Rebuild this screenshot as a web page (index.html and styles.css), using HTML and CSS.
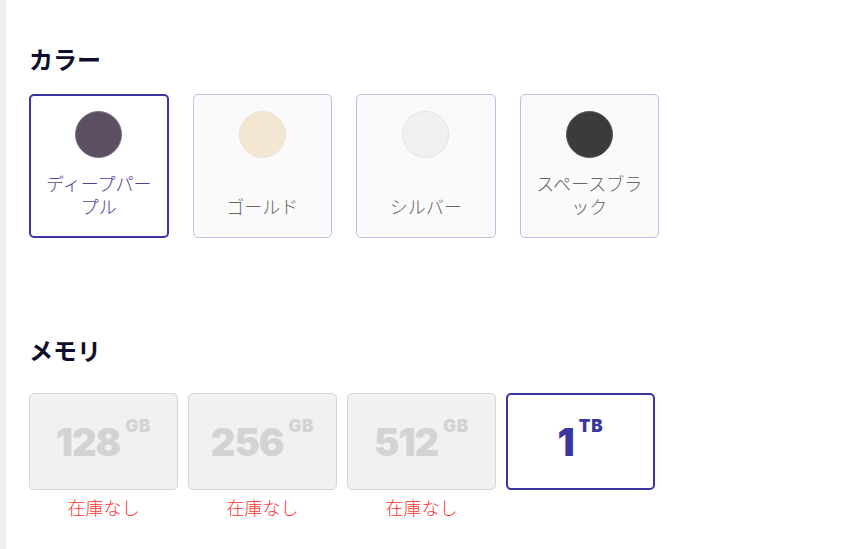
FILE: index.html
```html
<!DOCTYPE html>
<html lang="ja">
<head>
<meta charset="utf-8">
<link rel="stylesheet" href="styles.css">
</head>
<body>
<div class="page">
  <section class="group group-color">
    <h2 class="title">カラー</h2>
    <div class="swatches">
      <div class="swatch is-selected">
        <span class="dot dot-purple"></span>
        <span class="swatch-label">ディープパープル</span>
      </div>
      <div class="swatch">
        <span class="dot dot-gold"></span>
        <span class="swatch-label">ゴールド</span>
      </div>
      <div class="swatch">
        <span class="dot dot-silver"></span>
        <span class="swatch-label">シルバー</span>
      </div>
      <div class="swatch">
        <span class="dot dot-black"></span>
        <span class="swatch-label">スペースブラック</span>
      </div>
    </div>
  </section>
  <section class="group group-memory">
    <h2 class="title">メモリ</h2>
    <div class="memories">
      <div class="memory">
        <div class="mem-box is-disabled"><span class="amount">128</span><span class="unit">GB</span></div>
        <div class="stock">在庫なし</div>
      </div>
      <div class="memory">
        <div class="mem-box is-disabled"><span class="amount">256</span><span class="unit">GB</span></div>
        <div class="stock">在庫なし</div>
      </div>
      <div class="memory">
        <div class="mem-box is-disabled"><span class="amount">512</span><span class="unit">GB</span></div>
        <div class="stock">在庫なし</div>
      </div>
      <div class="memory">
        <div class="mem-box is-selected"><span class="amount">1</span><span class="unit">TB</span></div>
      </div>
    </div>
  </section>
</div>
</body>
</html>
```

FILE: styles.css
```css
* { box-sizing: border-box; }
html, body { margin: 0; padding: 0; background: #fff; }
body { font-family: "Noto Sans CJK JP", "Noto Sans", sans-serif; }

.page {
  min-height: 549px;
  border-left: 6px solid #efefef;
  padding: 43px 0 0 23px;
}

.title {
  margin: 0;
  font-size: 24px;
  line-height: 32px;
  font-weight: 700;
  color: #0f0f2d;
}

.group-color .title { margin-bottom: 19px; }
.group-memory { margin-top: 96px; }
.group-memory .title { margin-bottom: 27px; }

.swatches {
  display: flex;
  gap: 24px;
}

.swatch {
  width: 139.5px;
  height: 144px;
  border: 1px solid #c2bde6;
  border-radius: 5px;
  background: #fafafa;
  display: flex;
  flex-direction: column;
  align-items: center;
  padding: 16px 8px 19px;
}
.swatch.is-selected {
  border: 2px solid #3b369f;
  background: #fff;
  padding-top: 15px;
  padding-bottom: 18px;
}

.dot {
  width: 47px;
  height: 47px;
  border-radius: 50%;
  border: 1px solid #e6e4ee;
  flex: none;
}
.dot-purple { background: #5a4f63; border-color: #7a6f85; }
.dot-gold { background: #f3e7d2; border-color: #ebe3dc; }
.dot-silver { background: #eff1f1; border-color: #e2e2ea; }
.dot-black { background: #3d3b3a; border-color: #555; }

.swatch-label {
  margin-top: auto;
  text-align: center;
  font-size: 18px;
  line-height: 23px;
  font-weight: 300;
  color: #666;
}
.swatch.is-selected .swatch-label { color: #4c4394; }

.memories {
  display: flex;
  gap: 10px;
}

.memory {
  width: 149px;
  display: flex;
  flex-direction: column;
  align-items: center;
}

.mem-box {
  width: 149px;
  height: 97px;
  border-radius: 5px;
  display: flex;
  justify-content: center;
  align-items: center;
  font-family: "Inter", "Liberation Sans", sans-serif;
  font-weight: 900;
}
.mem-box.is-disabled {
  background: #f1f1f1;
  border: 1px solid #d6d6d6;
  color: #d3d3d3;
}
.mem-box.is-selected {
  background: #fff;
  border: 2px solid #3b369f;
  color: #3b369f;
}

.amount {
  font-size: 38px;
  line-height: 38px;
  letter-spacing: -1px;
}
.unit {
  align-self: center;
  font-size: 17px;
  line-height: 17px;
  margin-left: 5px;
  margin-bottom: 31px;
  letter-spacing: 0.8px;
}

.stock {
  margin-top: 5px;
  font-size: 18px;
  line-height: 24px;
  font-weight: 300;
  color: #ff3434;
}
```
